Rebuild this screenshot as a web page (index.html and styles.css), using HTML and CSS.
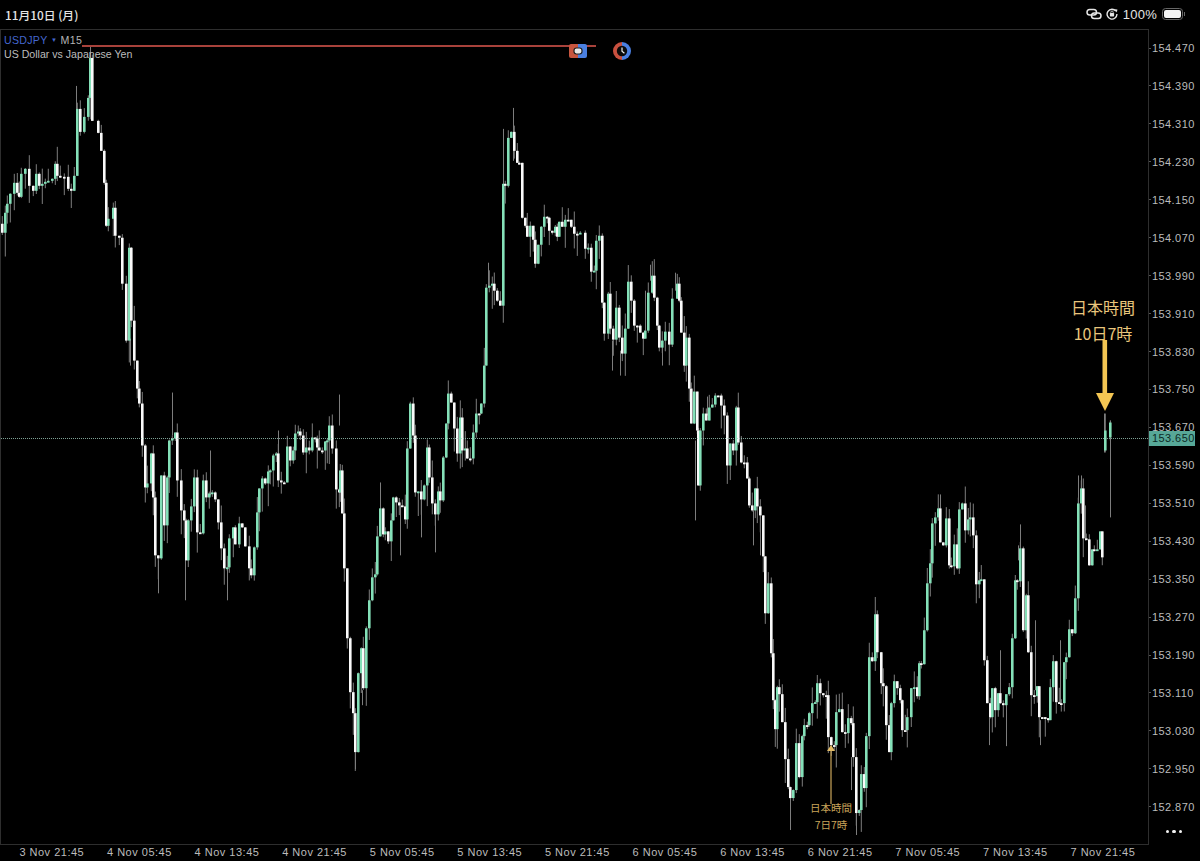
FILE: index.html
```html
<!DOCTYPE html>
<html lang="ja">
<head>
<meta charset="utf-8">
<title>USDJPY M15</title>
<link rel="stylesheet" href="styles.css">
</head>
<body>
<header class="status">
  <span class="status-date">11月10日 (月)</span>
  <div class="status-right">
    <svg class="ico-link" viewBox="0 0 16 12" width="16" height="12"><g fill="none" stroke="#e6e6e6" stroke-width="1.5"><rect x="1" y="1.5" width="9.5" height="5.5" rx="2.75"/><rect x="5.5" y="5" width="9.5" height="5.5" rx="2.75"/></g></svg>
    <svg class="ico-rot" viewBox="0 0 12 12" width="12" height="12"><path d="M9.9 3.2A4.9 4.9 0 1 0 10.9 6" fill="none" stroke="#e6e6e6" stroke-width="1.4"/><path d="M8.6 1.2l2.8.3-.6 3z" fill="#e6e6e6"/><rect x="3.9" y="5" width="4.2" height="3.4" rx=".6" fill="#e6e6e6"/><path d="M4.8 5V4.2a1.2 1.2 0 0 1 2.4 0V5" fill="none" stroke="#e6e6e6" stroke-width=".8"/></svg>
    <span class="status-pct">100%</span>
    <div class="battery"><div class="battery-fill"></div></div>
  </div>
</header>

<main class="workspace">
  <section class="chart">
    <svg id="candles" class="candles" viewBox="0 29 1147 815" preserveAspectRatio="none"></svg>
    <div class="legend">
      <div class="legend-row"><span class="sym">USDJPY</span><span class="sym-caret">▼</span><span class="tf">M15</span></div>
      <div class="legend-row legend-name">US Dollar vs Japanese Yen</div>
    </div>
    <div class="tool-line"></div>
    <svg class="tool-magnet" viewBox="0 0 18 14" width="18" height="14"><path d="M2 0h7v14H2a2 2 0 0 1-2-2V2a2 2 0 0 1 2-2z" fill="#c8563f"/><path d="M9 0h7a2 2 0 0 1 2 2v10a2 2 0 0 1-2 2H9z" fill="#4a7fe0"/><rect x="5" y="4" width="8" height="6" rx="2.4" fill="#e8e8e8" stroke="#222" stroke-width="1.2"/></svg>
    <svg class="tool-clock" viewBox="0 0 20 20" width="20" height="20"><path d="M10 1a9 9 0 0 0 0 18z" fill="#c8503f"/><path d="M10 1a9 9 0 0 1 0 18z" fill="#4a7fe0"/><circle cx="10" cy="10" r="5.2" fill="#0a0a0a"/><path d="M10 6.4v3.8l2.4 2" fill="none" stroke="#f0f0f0" stroke-width="1.2"/></svg>
    <div class="dotted"></div>

    <div class="note note-big"><span>日本時間</span><span>10日7時</span></div>
    <svg class="arrow-big" viewBox="0 0 18 72" width="18" height="72"><rect x="6.5" y="0" width="4.6" height="55" fill="#f4c653"/><path d="M0 53h18l-9 18z" fill="#f4c653"/></svg>
    <div class="note note-small"><span>日本時間</span><span>7日7時</span></div>
    <svg class="arrow-small" viewBox="0 0 8 60" width="8" height="60"><rect x="3.4" y="4" width="1.2" height="56" fill="#c9a45a"/><path d="M0 7l4-6 4 6z" fill="#e2bb66"/></svg>
  </section>

  <aside class="prices">
    <span>154.470</span><span>154.390</span><span>154.310</span><span>154.230</span><span>154.150</span><span>154.070</span><span>153.990</span><span>153.910</span><span>153.830</span><span>153.750</span><span>153.670</span><span>153.590</span><span>153.510</span><span>153.430</span><span>153.350</span><span>153.270</span><span>153.190</span><span>153.110</span><span>153.030</span><span>152.950</span><span>152.870</span>
    <div class="price-tag">153.650</div>
    <div class="more"><i></i><i></i><i></i></div>
  </aside>

  <footer class="times">
    <span>3 Nov 21:45</span><span>4 Nov 05:45</span><span>4 Nov 13:45</span><span>4 Nov 21:45</span><span>5 Nov 05:45</span><span>5 Nov 13:45</span><span>5 Nov 21:45</span><span>6 Nov 05:45</span><span>6 Nov 13:45</span><span>6 Nov 21:45</span><span>7 Nov 05:45</span><span>7 Nov 13:45</span><span>7 Nov 21:45</span>
  </footer>
</main>
<script src="chart.js"></script>
</body>
</html>
```
FILE: styles.css
```css
* { box-sizing: border-box; }
html, body { margin: 0; padding: 0; background: #000; }
body {
  width: 1200px; height: 861px; overflow: hidden;
  font-family: "Liberation Sans", "Noto Sans CJK JP", sans-serif;
  color: #c4c4c4;
}

.status {
  height: 29px; display: flex; align-items: center; justify-content: space-between;
  padding: 0 17px 1px 5px;
}
.status-date { font-family: "Noto Sans CJK JP", sans-serif; font-size: 11.8px; font-weight: 500; color: #e4e4e4; }
.status-right { display: flex; align-items: center; }
.ico-link { margin-right: 4px; }
.ico-rot { margin-right: 5px; }
.status-pct { font-size: 13px; letter-spacing: .25px; color: #e4e4e4; margin-right: 5px; }
.battery { width: 21px; height: 12px; border: 1px solid #666; border-radius: 3.5px; padding: 1px; position: relative; }
.battery-fill { width: 100%; height: 100%; background: #f4f4f4; border-radius: 2px; }
.battery::after { content: ""; position: absolute; right: -3px; top: 3px; width: 1.5px; height: 4px; background: #666; }

.workspace { display: grid; grid-template-columns: 1149px 51px; grid-template-rows: 816px 16px; }

.chart {
  position: relative; overflow: hidden; background: #000;
  border: 1px solid #2e2e2e;
}
.candles { position: absolute; inset: 0; width: 1147px; height: 814px; filter: blur(.45px); }
.wick { fill: #7d7d7d; }
.up { fill: #84e0b8; }
.down { fill: #fafafa; }

.legend { position: absolute; left: 3px; top: 3px; font-size: 10.6px; line-height: 14px; }
.legend-row { display: flex; align-items: center; white-space: nowrap; color: #bdbdbd; }
.sym { color: #4467cf; letter-spacing: .3px; }
.sym-caret { color: #4467cf; font-size: 6px; margin: 0 3.5px; }
.tf { color: #b5b5b5; letter-spacing: .3px; }

.tool-line { position: absolute; left: 81px; top: 15px; width: 514px; height: 2px; background: #a8423b; }
.tool-magnet { position: absolute; left: 568px; top: 14px; }
.tool-clock { position: absolute; left: 611px; top: 11px; }
.dotted { position: absolute; left: 0; right: 0; top: 408px; border-top: 1px dotted #a9d8c8; opacity: .75; }

.note { position: absolute; display: flex; flex-direction: column; align-items: center; font-family: "Noto Sans CJK JP", sans-serif; white-space: nowrap; }
.note-big { left: 1059px; width: 86px; top: 264px; font-size: 16px; line-height: 26px; color: #e9c67c; }
.note-small { left: 790px; width: 80px; top: 769px; font-size: 10.5px; line-height: 17px; color: #c9a45a; }
.arrow-big { position: absolute; left: 1095px; top: 310px; }
.arrow-small { position: absolute; left: 826px; top: 714px; }

.prices { position: relative; display: flex; flex-direction: column; padding-left: 3px; }
.prices > span {
  position: relative; height: 37.95px; line-height: 38px; flex: none;
  font-size: 11px; letter-spacing: .42px; color: #bcbcbc;
}
.prices > span::before { content: ""; position: absolute; left: -3px; top: 18.5px; width: 2px; height: 1px; background: #555; }
.price-tag {
  position: absolute; left: 0; top: 402px; width: 46px; height: 15px;
  background: #57a898; color: #0d2b26; font-size: 11px; line-height: 15px; letter-spacing: .42px; padding-left: 3px;
}
.more { position: absolute; left: 17px; top: 801px; display: flex; gap: 3px; }
.more i { width: 3.4px; height: 3.4px; border-radius: 50%; background: #f2f2f2; display: block; }

.times {
  grid-column: 1 / 3; display: grid; grid-template-columns: repeat(13, 87.6px);
  padding-left: 8px; font-size: 11px; line-height: 15px; letter-spacing: .5px; color: #bcbcbc;
}
.times span { text-align: center; white-space: nowrap; }
```
FILE: chart.js
```js
var closes = "2,232 5,212 7,203 10,193 14,182 17,192 19,196 21,173 25,168 29,185 33,190 36,173 39,185 42,183 45,181 48,180 52,178 55,163 57,175 60,176 64,176 68,188 71,190 74,175 77,108 80,131 84,116 88,97 90,57 92,120 98,132 101,150 104,182 106,225 108,218 113,207 115,235 119,237 122,283 126,340 129,247 131,320 134,360 137,388 139,403 142,445 145,487 147,483 151,453 153,497 155,555 158,558 161,475 164,525 167,477 169,440 172,438 175,432 177,480 181,510 184,520 186,560 188,520 191,506 194,477 197,532 200,533 203,480 206,497 209,493 212,492 215,499 218,522 221,548 224,568 227,567 229,538 233,527 235,544 239,523 242,527 245,546 249,568 251,575 254,547 257,512 259,488 262,478 265,483 268,471 270,470 273,455 276,453 278,480 281,482 284,482 287,446 290,460 293,450 295,433 298,431 300,435 303,452 306,447 309,450 312,437 315,438 317,447 319,450 322,450 325,441 327,440 329,425 332,448 336,489 339,492 340,470 342,513 344,568 347,638 350,692 353,713 355,752 358,673 361,648 363,688 366,628 369,600 372,577 375,574 377,536 380,508 383,534 385,531 388,541 391,520 393,497 396,502 399,505 402,506 405,519 407,448 410,403 413,435 415,492 418,491 421,499 424,485 427,447 429,477 432,503 435,514 438,491 440,500 443,457 446,423 448,393 451,402 454,428 457,453 460,417 462,450 465,448 467,458 470,458 473,432 476,413 479,413 481,403 484,365 486,287 489,285 492,283 494,290 497,300 500,305 503,183 505,185 508,137 511,131 514,150 517,162 519,162 522,217 525,225 527,236 530,225 533,239 535,263 538,244 541,226 544,216 547,217 549,230 552,232 555,226 557,236 559,221 562,226 565,219 568,219 571,226 574,233 577,233 580,232 585,248 588,247 591,271 594,270 596,240 599,235 602,302 604,333 608,293 610,328 613,339 616,307 619,337 622,353 625,328 628,281 631,300 634,325 637,325 640,332 643,338 645,330 648,292 652,275 654,297 657,325 659,347 662,340 665,331 669,344 672,298 677,283 679,300 681,332 684,365 686,337 689,388 691,423 694,391 697,430 698,485 700,430 703,413 706,420 709,407 712,404 715,395 718,395 721,405 724,415 727,465 730,443 733,450 736,407 738,442 741,462 744,462 747,478 749,505 752,510 755,488 757,506 760,515 763,556 765,613 768,583 771,653 773,700 775,729 777,687 779,694 782,722 785,759 788,787 790,798 793,790 796,743 799,777 802,736 804,725 807,725 809,713 812,703 815,702 817,683 820,693 823,695 826,695 828,737 831,745 834,745 836,712 839,709 842,732 845,733 848,718 851,723 853,757 856,813 859,810 861,774 864,788 866,736 869,657 872,661 875,614 877,652 881,683 883,686 886,725 889,752 891,703 894,681 897,688 900,700 902,730 905,730 907,717 911,688 914,687 917,696 919,663 921,664 924,630 927,583 930,563 932,523 935,517 938,508 940,542 943,545 946,518 949,565 951,566 954,544 957,568 959,509 962,503 965,530 968,519 970,517 973,535 976,584 979,580 981,579 984,660 987,703 990,717 992,688 995,710 998,693 1000,703 1003,705 1006,694 1009,687 1012,638 1015,580 1017,581 1020,548 1023,630 1026,595 1028,652 1031,695 1034,696 1037,686 1039,717 1042,717 1045,718 1048,720 1050,687 1053,661 1056,702 1059,703 1061,703 1064,662 1066,657 1069,629 1072,633 1075,598 1078,503 1081,488 1083,538 1086,539 1089,565 1092,549 1094,550 1097,549 1100,531 1102,557";
var longWicks = [[513,107,160],[90,45,60],[76,85,110],[172,392,435],[130,338,365],[158,560,593],[185,550,600],[227,568,600],[210,450,495],[355,752,769],[1110,420,517],[339,394,425],[278,430,480],[940,494,520],[1020,524,550],[989,717,745],[1006,700,746],[1040,720,745],[856,810,835],[790,798,830],[1078,475,503],[1081,475,490],[1104,413,452],[488,262,287],[503,128,185],[707,396,415],[645,290,330],[650,264,280],[675,272,290],[662,340,365],[620,350,375],[612,340,370],[400,505,555],[435,514,552],[421,499,537],[380,482,510],[362,690,705],[851,757,790],[1018,545,560],[1000,650,703],[1085,505,540],[1060,640,702],[1035,620,690],[760,515,555],[753,510,545],[695,440,520]];
var svg = document.getElementById("candles");
var NS = "http://www.w3.org/2000/svg";
function rect(cls, x, y, w, h) {
  var r = document.createElementNS(NS, "rect");
  r.setAttribute("class", cls);
  r.setAttribute("x", x); r.setAttribute("y", y);
  r.setAttribute("width", w); r.setAttribute("height", h);
  svg.appendChild(r);
}
var seed = 12345;
function rnd() { seed = (seed * 1103515245 + 12345) & 0x7fffffff; return seed / 0x7fffffff; }

var bars = [], prev = 223;
closes.split(" ").forEach(function (p) {
  var a = p.split(","), x = +a[0] - 2, c = +a[1];
  var hi = Math.min(prev, c) - Math.pow(rnd(), 2) * 18;
  var lo = Math.max(prev, c) + Math.pow(rnd(), 2) * 24;
  bars.push([x, prev, c, hi, lo]);
  prev = c;
});
bars.push([1103, 450, 430, 413, 452]);
bars.push([1108, 437, 422, 420, 440]);

bars.forEach(function (b) { rect("wick", b[0] + 0.8, b[3], 1, b[4] - b[3]); });
longWicks.forEach(function (w) { rect("wick", w[0] - 1, Math.min(w[1], w[2]), 1, Math.abs(w[2] - w[1])); });
bars.forEach(function (b, i) {
  var up = b[2] < b[1];
  var top = Math.min(b[1], b[2]), h = Math.max(Math.abs(b[2] - b[1]), 1.8);
  rect(up ? "up" : "down", b[0], top, 2.6, h);
});
```
